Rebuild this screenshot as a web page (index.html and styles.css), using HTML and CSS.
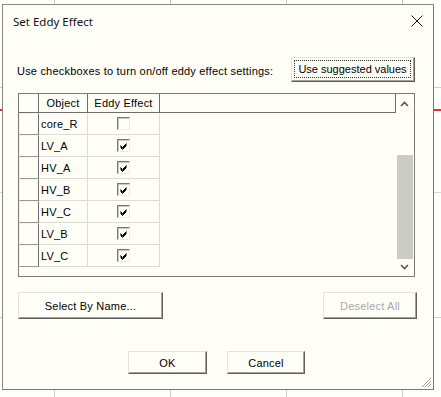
FILE: index.html
```html
<!DOCTYPE html>
<html>
<head>
<meta charset="utf-8">
<link rel="stylesheet" href="styles.css">
</head>
<body>
<div class="dialog">
  <div class="titlebar">
    <span class="title">Set Eddy Effect</span>
    <svg class="close" width="12" height="12" viewBox="0 0 12 12"><path d="M0.5 0.5 L11.5 11.5 M11.5 0.5 L0.5 11.5" stroke="#1a1a1a" stroke-width="1" fill="none"/></svg>
  </div>
  <div class="instr">
    <span class="label">Use checkboxes to turn on/off eddy effect settings:</span>
    <button class="btn suggest"><span class="focus">Use suggested values</span></button>
  </div>
  <div class="table">
    <div class="cells">
      <div class="hrow">
        <div class="rh hc"></div>
        <div class="c-obj hc center">Object</div>
        <div class="c-eddy hc center">Eddy Effect</div>
        <div class="c-rest hc"></div>
      </div>
      <div class="row"><div class="rh"></div><div class="c-obj">core_R</div><div class="c-eddy"><span class="cb"></span></div></div>
      <div class="row"><div class="rh"></div><div class="c-obj">LV_A</div><div class="c-eddy"><span class="cb on"><svg width="9" height="9" viewBox="0 0 9 9"><path d="M1.5 3.5 L3.5 5.5 L7.5 1.5 M1.5 4.5 L3.5 6.5 L7.5 2.5 M1.5 5.5 L3.5 7.5 L7.5 3.5" stroke="#000" stroke-width="1" fill="none"/></svg></span></div></div>
      <div class="row"><div class="rh"></div><div class="c-obj">HV_A</div><div class="c-eddy"><span class="cb on"><svg width="9" height="9" viewBox="0 0 9 9"><path d="M1.5 3.5 L3.5 5.5 L7.5 1.5 M1.5 4.5 L3.5 6.5 L7.5 2.5 M1.5 5.5 L3.5 7.5 L7.5 3.5" stroke="#000" stroke-width="1" fill="none"/></svg></span></div></div>
      <div class="row"><div class="rh"></div><div class="c-obj">HV_B</div><div class="c-eddy"><span class="cb on"><svg width="9" height="9" viewBox="0 0 9 9"><path d="M1.5 3.5 L3.5 5.5 L7.5 1.5 M1.5 4.5 L3.5 6.5 L7.5 2.5 M1.5 5.5 L3.5 7.5 L7.5 3.5" stroke="#000" stroke-width="1" fill="none"/></svg></span></div></div>
      <div class="row"><div class="rh"></div><div class="c-obj">HV_C</div><div class="c-eddy"><span class="cb on"><svg width="9" height="9" viewBox="0 0 9 9"><path d="M1.5 3.5 L3.5 5.5 L7.5 1.5 M1.5 4.5 L3.5 6.5 L7.5 2.5 M1.5 5.5 L3.5 7.5 L7.5 3.5" stroke="#000" stroke-width="1" fill="none"/></svg></span></div></div>
      <div class="row"><div class="rh"></div><div class="c-obj">LV_B</div><div class="c-eddy"><span class="cb on"><svg width="9" height="9" viewBox="0 0 9 9"><path d="M1.5 3.5 L3.5 5.5 L7.5 1.5 M1.5 4.5 L3.5 6.5 L7.5 2.5 M1.5 5.5 L3.5 7.5 L7.5 3.5" stroke="#000" stroke-width="1" fill="none"/></svg></span></div></div>
      <div class="row"><div class="rh"></div><div class="c-obj">LV_C</div><div class="c-eddy"><span class="cb on"><svg width="9" height="9" viewBox="0 0 9 9"><path d="M1.5 3.5 L3.5 5.5 L7.5 1.5 M1.5 4.5 L3.5 6.5 L7.5 2.5 M1.5 5.5 L3.5 7.5 L7.5 3.5" stroke="#000" stroke-width="1" fill="none"/></svg></span></div></div>
    </div>
    <div class="scrollbar">
      <svg class="arrow" width="17" height="14" viewBox="0 0 17 14"><path d="M5 9 L8.5 5.5 L12 9" stroke="#555" stroke-width="1.6" fill="none"/></svg>
      <div class="track"><div class="thumb"></div></div>
      <svg class="arrow" width="17" height="14" viewBox="0 0 17 14"><path d="M5 5 L8.5 8.5 L12 5" stroke="#555" stroke-width="1.6" fill="none"/></svg>
    </div>
  </div>
  <div class="btnrow">
    <button class="btn wide">Select By Name...</button>
    <button class="btn desel" disabled>Deselect All</button>
  </div>
  <div class="okrow">
    <button class="btn ok">OK</button>
    <button class="btn cancel">Cancel</button>
  </div>
  <svg class="grip" width="12" height="12" viewBox="0 0 12 12"><path d="M11 2 L2 11 M11 5 L5 11 M11 8 L8 11" stroke="#a0a098" stroke-width="1" fill="none"/><path d="M11 3 L3 11 M11 6 L6 11 M11 9 L9 11" stroke="#fff" stroke-width="1" fill="none"/></svg>
</div>
</body>
</html>
```
FILE: styles.css
```css
html, body {
  margin: 0;
  padding: 0;
}
body {
  width: 441px;
  height: 397px;
  overflow: hidden;
  background-color: #fefefb;
  background-image:
    linear-gradient(to bottom, transparent 87px, #d0d0cc 87px, #d0d0cc 88px, transparent 88px),
    linear-gradient(to bottom, transparent 109px, #e0303a 109px, #e0303a 111px, transparent 111px),
    linear-gradient(to bottom, transparent 192px, #d8d8d4 192px, #d8d8d4 193px, transparent 193px),
    linear-gradient(to bottom, transparent 317px, #d0d0cc 317px, #d0d0cc 318px, transparent 318px),
    repeating-linear-gradient(to right, transparent 0, transparent 54px, #c8c8c4 54px, #c8c8c4 55px, transparent 55px, transparent 116px);
  font-family: "Liberation Sans", Arial, sans-serif;
  font-size: 11px;
  letter-spacing: 0.2px;
  color: #000;
}
.dialog {
  position: relative;
  box-sizing: border-box;
  margin: 4px 0 0 2px;
  width: 432px;
  height: 386px;
  background: #fffff8;
  border: 1px solid #8a8a84;
  border-right-color: #7a7a74;
  border-bottom-color: #7a7a74;
  padding: 0 18px 0 15px;
  display: flex;
  flex-direction: column;
}
.titlebar {
  height: 30px;
  margin: 0 -18px 0 -15px;
  display: flex;
  align-items: center;
  padding: 2px 10px 0 10px;
  box-sizing: border-box;
}
.title {
  font-family: "Noto Sans", "Open Sans", sans-serif;
  font-size: 11.5px;
  letter-spacing: 0;
  color: #111;
  flex: 1;
}
.instr {
  margin-top: 22px;
  height: 25px;
  display: flex;
  align-items: center;
}
.label {
  margin-left: -1px;
  padding-top: 2px;
}
.btn {
  font-family: "Liberation Sans", Arial, sans-serif;
  font-size: 11px;
  letter-spacing: 0.2px;
  color: #000;
  background: #fffff8;
  box-sizing: border-box;
  border: 1px solid;
  border-color: #e4e4dc #5e5e5a #5e5e5a #e4e4dc;
  box-shadow: inset -1px -1px 0 #a4a49c;
  padding: 0;
  margin: 0;
}
.suggest {
  margin-left: auto;
  width: 124px;
  height: 25px;
  padding: 2px 3px 3px 2px;
  letter-spacing: 0;
}
.focus {
  display: block;
  height: 100%;
  box-sizing: border-box;
  border: 1px dotted #333;
  line-height: 16px;
  text-align: center;
}
.table {
  margin-top: 11px;
  height: 184px;
  box-sizing: border-box;
  border: 1px solid #7c7c76;
  display: flex;
}
.cells {
  flex: 1;
  display: flex;
  flex-direction: column;
}
.hrow, .row {
  display: flex;
}
.hrow {
  height: 19px;
}
.row {
  height: 22px;
}
.hrow > div, .row > div {
  box-sizing: border-box;
  display: flex;
  align-items: center;
}
.rh {
  width: 20px;
  border-right: 1px solid #6e6e6a;
  border-bottom: 1px solid #9a9a94;
  background: #fffff8;
}
.hc {
  border-right: 1px solid #6e6e6a;
  border-bottom: 1px solid #6e6e6a;
}
.hrow .rh {
  border-bottom-color: #6e6e6a;
}
.center {
  justify-content: center;
}
.c-obj {
  width: 49px;
  padding-left: 2px;
}
.hrow .c-obj {
  padding-left: 0;
}
.c-eddy {
  width: 72px;
  justify-content: center;
}
.c-rest {
  flex: 1;
}
.row .c-obj, .row .c-eddy {
  border-right: 1px solid #dcdcd4;
  border-bottom: 1px solid #dcdcd4;
}
.row .rh {
  border-top: 1px solid #f4f4ee;
  border-left: 1px solid #f4f4ee;
}
.cb {
  box-sizing: border-box;
  width: 13px;
  height: 13px;
  margin-left: -1px;
  border: 1px solid;
  border-color: #7a7a74 #ecece4 #ecece4 #7a7a74;
  box-shadow: inset 1px 1px 0 #c8c8c0;
  background: #fffff8;
  display: flex;
  align-items: center;
  justify-content: center;
}
.cb svg {
  margin: 1px 0 0 1px;
}
.scrollbar {
  width: 18px;
  display: flex;
  flex-direction: column;
}
.arrow {
  display: block;
  margin: 3px 0 0 0;
}
.scrollbar .arrow:last-child {
  margin: 0 0 2px 0;
}
.track {
  flex: 1;
  display: flex;
  flex-direction: column;
  justify-content: flex-end;
  padding: 0 1px 1px 1px;
}
.thumb {
  height: 104px;
  background: #cbccc5;
}
.btnrow {
  margin-top: 15px;
  height: 27px;
  display: flex;
  justify-content: space-between;
}
.wide {
  width: 145px;
  height: 27px;
}
.desel {
  width: 94px;
  height: 27px;
  margin-right: -2px;
  color: #a8a8a4;
}
.okrow {
  margin-top: 32px;
  display: flex;
  justify-content: center;
  gap: 20px;
}
.ok {
  width: 79px;
  height: 23px;
}
.cancel {
  width: 78px;
  height: 23px;
}
.grip {
  position: absolute;
  right: 1px;
  bottom: 1px;
}
```
